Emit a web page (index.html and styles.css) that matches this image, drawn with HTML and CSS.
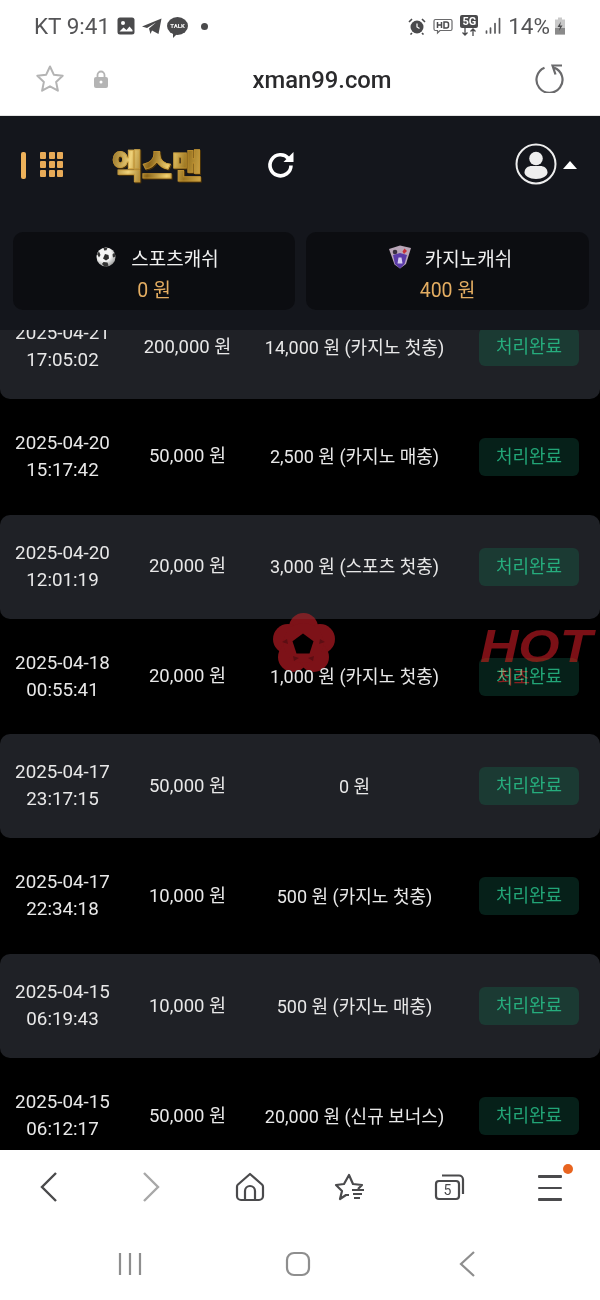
FILE: index.html
```html
<!doctype html>
<html lang="ko">
  <head>
    <meta charset="UTF-8" />
    <meta name="viewport" content="width=device-width, initial-scale=1.0" />
    <title>xman99.com</title>
    <link rel="stylesheet" href="styles.css">
  </head>
  <body>
    <div class="phone">
      <div class="status-bar">
        <div class="status-left">
          <span>KT 9:41</span>
          <svg width="18" height="18" viewBox="0 0 18 18"><rect x="0.500" y="0.500" width="17" height="17" rx="2.500" fill="#4a4a4c"/><circle cx="6" cy="6" r="2" fill="#fff"/><path d="M2.500 14.500l4-4 3 2.500 3-3.500 3 3.500v1.500z" fill="#fff"/></svg>
          <svg width="20" height="18" viewBox="0 0 20 18"><path d="M0 9.500L19.500 1.500 16.500 17 10 13.500 8.500 17 7 11.500 14 5.500 5 11z" fill="#4a4a4c"/></svg>
          <span class="talk">TALK</span>
          <i class="status-dot"></i>
        </div>
        <div class="status-right">
          <svg width="18" height="18" viewBox="0 0 18 18"><circle cx="9" cy="10" r="6.500" fill="#4a4a4c"/><path d="M9 6.500V10l2.500 1.500" stroke="#fff" stroke-width="1.200" fill="none"/><path d="M1 5l3-3M17 5l-3-3M4 16l-1.500 1.500M14 16l1.500 1.500" stroke="#4a4a4c" stroke-width="1.600"/></svg>
          <svg width="20" height="18" viewBox="0 0 20 18"><path d="M2.500 2.500h15a1.500 1.500 0 0 1 1.500 1.500v8a1.500 1.500 0 0 1-1.500 1.500H7l-2.500 2.500v-2.500h-2A1.500 1.500 0 0 1 1 12V4a1.500 1.500 0 0 1 1.500-1.500z" fill="none" stroke="#6a6a6c" stroke-width="1.200"/><path d="M4.500 5v6M8.500 5v6M4.500 8h4M11 5v6h2.500a2 2 0 0 0 2-2V7a2 2 0 0 0-2-2z" fill="none" stroke="#4a4a4c" stroke-width="1.500"/></svg>
          <span class="five-g"><b>5G</b><svg width="16" height="8" viewBox="0 0 16 8"><path d="M4 0v7M1.500 4.500L4 7l2.500-2.500M12 8V1M9.500 3.500L12 1l2.500 2.500" stroke="#4a4a4c" stroke-width="1.300" fill="none"/></svg></span>
          <svg width="16" height="18" viewBox="0 0 16 18"><path d="M1.500 14v2M5.500 11v5M10 6.500V16M14.500 1.500V16" stroke="#5a5a5c" stroke-width="1.700" stroke-linecap="round"/></svg>
          <span class="battery-text">14%</span>
          <svg width="12" height="18" viewBox="0 0 12 18"><path d="M4 0.500h4v2h3v15H1v-15h3z" fill="#c9c9c9"/><path d="M1 11h10v6.500H1z" fill="#8a8a8a"/><path d="M7 4.500L3.500 10H6l-1 4 3.500-5.500H6z" fill="#4a4a4c"/></svg>
        </div>
      </div>

      <div class="url-bar">
        <svg class="url-star" width="32" height="32" viewBox="0 0 32 32"><path d="M16 3.500l3.800 8.200 8.900 1.100-6.600 6.100 1.800 8.800-7.900-4.400-7.900 4.400 1.800-8.800-6.600-6.100 8.900-1.100z" fill="none" stroke="#b4b4b4" stroke-width="2" stroke-linejoin="round"/></svg>
        <svg class="url-lock" width="16" height="20" viewBox="0 0 16 20"><path d="M4.500 9V6a3.500 3.500 0 0 1 7 0v3" fill="none" stroke="#b4b4b4" stroke-width="1.800"/><rect x="1" y="8" width="14" height="11" rx="2" fill="#b4b4b4"/><circle cx="8" cy="13" r="1.500" fill="#fff"/></svg>
        <span class="url-text">xman99.com</span>
        <svg class="url-reload" width="30" height="30" viewBox="0 0 30 30"><path d="M10.500 4.800A13 13 0 1 0 20 4.600" fill="none" stroke="#6a6a6c" stroke-width="2.200"/><path d="M28 2.500H18.500l3 9" fill="none" stroke="#6a6a6c" stroke-width="2.200"/></svg>
      </div>

      <header class="site-header">
        <div class="top-row">
          <span class="gold-bar"></span>
          <div class="grid-icon"><i></i><i></i><i></i><i></i><i></i><i></i><i></i><i></i><i></i></div>
          <div class="logo">엑스맨</div>
          <svg class="refresh" width="30" height="30" viewBox="0 0 30 30"><path d="M22.500 9.500a10.500 10.500 0 1 0 2.500 7" fill="none" stroke="#fff" stroke-width="3.600"/><path d="M27.500 3v10h-10z" fill="#fff"/></svg>
          <div class="user-menu">
            <svg width="42" height="42" viewBox="0 0 42 42"><circle cx="21" cy="21" r="19.500" fill="none" stroke="#eee" stroke-width="2"/><circle cx="21" cy="15.500" r="6.800" fill="#eee"/><path d="M9.500 29.500c0-4.500 4-6.500 7-6.500h9c3 0 7 2 7 6.500 0 3.500-5 6.500-11.500 6.500s-11.500-3-11.500-6.500z" fill="#eee"/></svg>
            <span class="caret"></span>
          </div>
        </div>
        <div class="cash-row">
          <div class="cash-card">
            <div class="cash-title sports">
              <svg width="20" height="20" viewBox="0 0 20 20"><defs><radialGradient id="ball" cx="0.400" cy="0.350" r="0.750"><stop offset="0.500" stop-color="#f4f4f4"/><stop offset="1" stop-color="#8a8a8a"/></radialGradient></defs><circle cx="10" cy="10" r="9.500" fill="url(#ball)"/><path d="M9 7l3.500 1 .5 3.500-3 2-3-2z" fill="#2c2c2c"/><path d="M7.500 1l4-.3-1 2.500-2.300.2zM1 7l2-2.500L4.500 8l-1.500 2.500zM18.500 5.500l1 4-2.500 1-.5-3zM6 17l1.500-2 4 .5 1 3-3.500 1.500z" fill="#333"/></svg>
              <span>스포츠캐쉬</span>
            </div>
            <div class="cash-value">0 원</div>
          </div>
          <div class="cash-card">
            <div class="cash-title casino">
              <svg width="24" height="24" viewBox="0 0 24 24"><path d="M1 4l11-3.500L23 3l-5 16-6 4.500-5.500-4z" fill="#b9a6b8"/><path d="M5 10l7-2 7 2-2.500 9-4.500 4.500-5-4.500z" fill="#5a3aa8"/><circle cx="7" cy="7" r="2.300" fill="#3a3040"/><path d="M16.500 3.500l2.500 2.500-3 3-1.500-2.500z" fill="#c8303a"/><path d="M10.500 12.500h3l1 6h-5z" fill="#d6cdf0"/></svg>
              <span>카지노캐쉬</span>
            </div>
            <div class="cash-value">400 원</div>
          </div>
        </div>
      </header>

      <main class="list-wrap">
        <div class="list">
          <div class="row">
            <div class="date">2025-04-21<br>17:05:02</div><div class="amount">200,000 원</div><div class="bonus">14,000 원 (카지노 첫충)</div><div class="state"><span>처리완료</span></div>
          </div>
          <div class="row">
            <div class="date">2025-04-20<br>15:17:42</div><div class="amount">50,000 원</div><div class="bonus">2,500 원 (카지노 매충)</div><div class="state"><span>처리완료</span></div>
          </div>
          <div class="row">
            <div class="date">2025-04-20<br>12:01:19</div><div class="amount">20,000 원</div><div class="bonus">3,000 원 (스포츠 첫충)</div><div class="state"><span>처리완료</span></div>
          </div>
          <div class="row">
            <div class="date">2025-04-18<br>00:55:41</div><div class="amount">20,000 원</div><div class="bonus">1,000 원 (카지노 첫충)</div><div class="state"><span>처리완료</span></div>
          </div>
          <div class="row">
            <div class="date">2025-04-17<br>23:17:15</div><div class="amount">50,000 원</div><div class="bonus">0 원</div><div class="state"><span>처리완료</span></div>
          </div>
          <div class="row">
            <div class="date">2025-04-17<br>22:34:18</div><div class="amount">10,000 원</div><div class="bonus">500 원 (카지노 첫충)</div><div class="state"><span>처리완료</span></div>
          </div>
          <div class="row">
            <div class="date">2025-04-15<br>06:19:43</div><div class="amount">10,000 원</div><div class="bonus">500 원 (카지노 매충)</div><div class="state"><span>처리완료</span></div>
          </div>
          <div class="row">
            <div class="date">2025-04-15<br>06:12:17</div><div class="amount">50,000 원</div><div class="bonus">20,000 원 (신규 보너스)</div><div class="state"><span>처리완료</span></div>
          </div>
        </div>

        <svg class="flower" width="62" height="60" viewBox="0 0 62 60"><g fill="#7d1218"><circle cx="30.500" cy="14.500" r="14.500"/><circle cx="15" cy="26" r="15"/><circle cx="47" cy="26" r="15"/><circle cx="20" cy="44" r="15"/><circle cx="41" cy="44" r="15"/><circle cx="30.500" cy="30" r="20"/></g><path d="M30 20.500l10.500 7.800-4 12.200h-13l-4-12.200z" fill="#000"/><path d="M14 26l-5 3 6 2zM47 26l5 3-6 2zM20 43l6 2-5 3zM41 43l-6 2 5 3z" fill="#5c0e13"/></svg>
        <div class="hot"><span class="hot-word">HOT</span><span class="hot-sub">최초</span></div>
      </main>

      <nav class="bottom-bar">
        <svg width="22" height="32" viewBox="0 0 22 32"><path d="M17 2L3 16l14 14" fill="none" stroke="#4a4a4c" stroke-width="2.400"/></svg>
        <svg width="22" height="32" viewBox="0 0 22 32"><path d="M5 2l14 14L5 30" fill="none" stroke="#a8a8a8" stroke-width="2.400"/></svg>
        <svg width="30" height="30" viewBox="0 0 30 30"><path d="M15 2L3 12.500a3 3 0 0 0-1 2.200V24a4 4 0 0 0 4 4h18a4 4 0 0 0 4-4v-9.300a3 3 0 0 0-1-2.200z" fill="none" stroke="#4a4a4c" stroke-width="2.200" stroke-linejoin="round"/><path d="M10 27v-8a5 5 0 0 1 10 0v8" fill="none" stroke="#4a4a4c" stroke-width="2.200"/></svg>
        <svg width="32" height="30" viewBox="0 0 32 30"><path d="M15 23H12l-6 4 2-8-6-6 8-1 5-9 4 9 9 1-4 4" fill="none" stroke="#4a4a4c" stroke-width="2.200" stroke-linejoin="round"/><path d="M18 18h12M19 22h9M20 26h6" stroke="#4a4a4c" stroke-width="2"/></svg>
        <div class="tabs-icon">
          <svg width="32" height="28" viewBox="0 0 32 28"><path d="M8 2.500h17a4 4 0 0 1 4 4V21" fill="none" stroke="#4a4a4c" stroke-width="2.200"/><rect x="2" y="8" width="23" height="18" rx="3" fill="none" stroke="#4a4a4c" stroke-width="2.200"/></svg>
          <span>5</span>
        </div>
        <div class="menu-icon"><i></i><i></i><i></i><b></b></div>
      </nav>

      <div class="system-bar">
        <svg width="26" height="26" viewBox="0 0 26 26"><path d="M3 2v22M13 2v22M23 2v22" stroke="#8e8e8e" stroke-width="2.200"/></svg>
        <svg width="26" height="26" viewBox="0 0 26 26"><rect x="2" y="2" width="22" height="22" rx="7" fill="none" stroke="#8e8e8e" stroke-width="2.200"/></svg>
        <svg class="sys-back" width="20" height="28" viewBox="0 0 20 28"><path d="M16 2L3 14l13 12" fill="none" stroke="#8e8e8e" stroke-width="2.200"/></svg>
      </div>
    </div>
  </body>
</html>
```

FILE: styles.css
```css
* {
  box-sizing: border-box;
}
body {
  margin: 0;
  padding: 0;
  background-color: #000;
  font-family: Roboto, "Noto Sans CJK KR", sans-serif;
}
.phone {
  width: 600px;
  height: 1300px;
  display: flex;
  flex-direction: column;
  overflow: hidden;
}

/* status bar */
.status-bar {
  height: 52px;
  flex: none;
  background-color: #fff;
  color: #555557;
  display: flex;
  justify-content: space-between;
  align-items: center;
  padding: 0 34px;
  font-size: 22.500px;
}
.status-left,
.status-right {
  display: flex;
  align-items: center;
}
.status-left {
  gap: 7px;
}
.status-right {
  gap: 7px;
}
.talk {
  position: relative;
  width: 21px;
  height: 18px;
  margin-left: -2px;
  border-radius: 50%;
  background-color: #4a4a4c;
  color: #fff;
  font-size: 6px;
  font-weight: 700;
  line-height: 18px;
  text-align: center;
}
.talk::after {
  content: "";
  position: absolute;
  left: 6px;
  bottom: -3px;
  border-top: 5px solid #4a4a4c;
  border-right: 5px solid transparent;
}
.status-dot {
  width: 7px;
  height: 7px;
  border-radius: 50%;
  background-color: #4a4a4c;
  margin-left: 6px;
}
.five-g {
  display: flex;
  flex-direction: column;
  align-items: center;
  margin-top: -2px;
}
.five-g b {
  background-color: #4a4a4c;
  color: #fff;
  font-size: 11px;
  line-height: 13px;
  padding: 0 2px;
  border-radius: 2px;
}
.battery-text {
  margin-right: -3px;
}

/* url bar */
.url-bar {
  height: 64px;
  flex: none;
  background-color: #fff;
  position: relative;
  display: flex;
  justify-content: center;
  align-items: center;
  padding: 0 0 8px 44px;
  border-bottom: 1px solid #e4e4e4;
}
.url-text {
  font-size: 23.800px;
  font-weight: 500;
  color: #2a2a2c;
}
.url-star {
  position: absolute;
  left: 34px;
  top: 11px;
}
.url-lock {
  position: absolute;
  left: 93px;
  top: 17px;
}
.url-reload {
  position: absolute;
  left: 534px;
  top: 11px;
}

/* site header */
.site-header {
  height: 214px;
  flex: none;
  background-color: #14161c;
}
.top-row {
  height: 116px;
  position: relative;
}
.gold-bar {
  position: absolute;
  left: 21px;
  top: 36px;
  width: 5px;
  height: 27px;
  border-radius: 2px;
  background-color: #eeb25a;
}
.grid-icon {
  position: absolute;
  left: 40px;
  top: 36px;
  display: grid;
  grid-template-columns: repeat(3, 6px);
  grid-auto-rows: 6.500px;
  gap: 2.500px;
}
.grid-icon i {
  background-color: #e8ab58;
  border-radius: 1px;
}
.logo {
  position: absolute;
  left: 112px;
  top: 26px;
  font-family: "Noto Sans CJK KR", sans-serif;
  font-size: 33px;
  font-weight: 900;
  line-height: 44px;
  letter-spacing: -0.500px;
  background: linear-gradient(100deg, #8c6a20, #efd27a 22%, #8a6418 42%, #f0d070 62%, #9a7420 80%, #d8b050);
  -webkit-background-clip: text;
  background-clip: text;
  color: transparent;
  -webkit-text-stroke: 1px rgba(200, 150, 50, 0.6);
  filter: drop-shadow(1px 1px 0 #4a3208);
}
.refresh {
  position: absolute;
  left: 266px;
  top: 33px;
}
.user-menu {
  position: absolute;
  left: 515px;
  top: 27px;
  display: flex;
  align-items: center;
  gap: 6px;
}
.caret {
  width: 0;
  height: 0;
  border-left: 7px solid transparent;
  border-right: 7px solid transparent;
  border-bottom: 8px solid #fff;
  margin-top: 1px;
}
.cash-row {
  display: grid;
  grid-template-columns: 282px 283px;
  gap: 11px;
  padding: 0 12px 0 13px;
}
.cash-card {
  height: 78px;
  background-color: #0c0d11;
  border-radius: 10px;
  text-align: center;
  padding-top: 11px;
}
.cash-title {
  display: flex;
  justify-content: center;
  align-items: center;
  gap: 15px;
  height: 28px;
  color: #f2f2f2;
  font-size: 19px;
}
.cash-title.sports {
  padding-left: 7px;
}
.cash-title.casino {
  padding-left: 5px;
  gap: 13px;
}
.cash-value {
  margin-top: 6px;
  color: #e4ad62;
  font-size: 19.500px;
  line-height: 28px;
}

/* list */
.list-wrap {
  height: 820px;
  flex: none;
  position: relative;
  overflow: hidden;
  background-color: #000;
}
.list {
  margin-top: -35px;
  display: flex;
  flex-direction: column;
  gap: 5.860px;
}
.row {
  height: 104px;
  flex: none;
  display: grid;
  grid-template-columns: 125px 125px 208px 142px;
  align-items: center;
  text-align: center;
  color: #e8e8e8;
  font-size: 18px;
  line-height: 27px;
  border-radius: 10px;
}
.row:nth-child(odd) {
  background-color: #1f2126;
}
.date {
  font-size: 18.800px;
}
.amount {
  font-size: 18.500px;
}
.bonus {
  padding-left: 1px;
}
.state span {
  display: inline-block;
  width: 100px;
  height: 38px;
  line-height: 37px;
  border-radius: 6px;
  background-color: #062019;
  color: #22a577;
  font-size: 18px;
}
.row:nth-child(odd) .state span {
  background-color: #1b3a33;
  color: #26ad7d;
}

/* floating badges, they sit over the list and only lighten it */
.flower {
  position: absolute;
  left: 273px;
  top: 283px;
  mix-blend-mode: lighten;
}
.hot {
  position: absolute;
  left: 480px;
  top: 293px;
  width: 116px;
  height: 70px;
  mix-blend-mode: lighten;
  font-family: "Liberation Sans", sans-serif;
  color: #7b1016;
}
.hot-word {
  display: block;
  font-size: 47px;
  font-style: italic;
  font-weight: 700;
  line-height: 46px;
  transform: scaleX(1.130);
  transform-origin: left;
}
.hot-sub {
  position: absolute;
  left: 17px;
  top: 41px;
  font-family: "Noto Sans CJK KR", sans-serif;
  font-size: 18px;
  line-height: 24px;
  color: #8a1f22;
}

/* browser bottom bar */
.bottom-bar {
  height: 74px;
  flex: none;
  background-color: #fff;
  display: grid;
  grid-template-columns: repeat(6, 100px);
  justify-items: center;
  align-items: center;
}
.tabs-icon {
  position: relative;
  width: 32px;
  height: 28px;
}
.tabs-icon span {
  position: absolute;
  left: 2px;
  top: 8px;
  width: 23px;
  text-align: center;
  font-size: 14px;
  line-height: 18px;
  color: #4a4a4c;
}
.menu-icon {
  position: relative;
  width: 24px;
  display: flex;
  flex-direction: column;
  gap: 9px;
  margin-top: 2px;
}
.menu-icon i {
  height: 2.500px;
  background-color: #4a4a4c;
  border-radius: 1px;
}
.menu-icon b {
  position: absolute;
  right: -11px;
  top: -11px;
  width: 10px;
  height: 10px;
  border-radius: 50%;
  background-color: #e8641f;
}

/* android nav */
.system-bar {
  flex: 1;
  background-color: #fff;
  display: flex;
  align-items: center;
  gap: 142px;
  padding: 4px 0 0 117px;
}
.sys-back {
  margin-left: 5px;
}
```
